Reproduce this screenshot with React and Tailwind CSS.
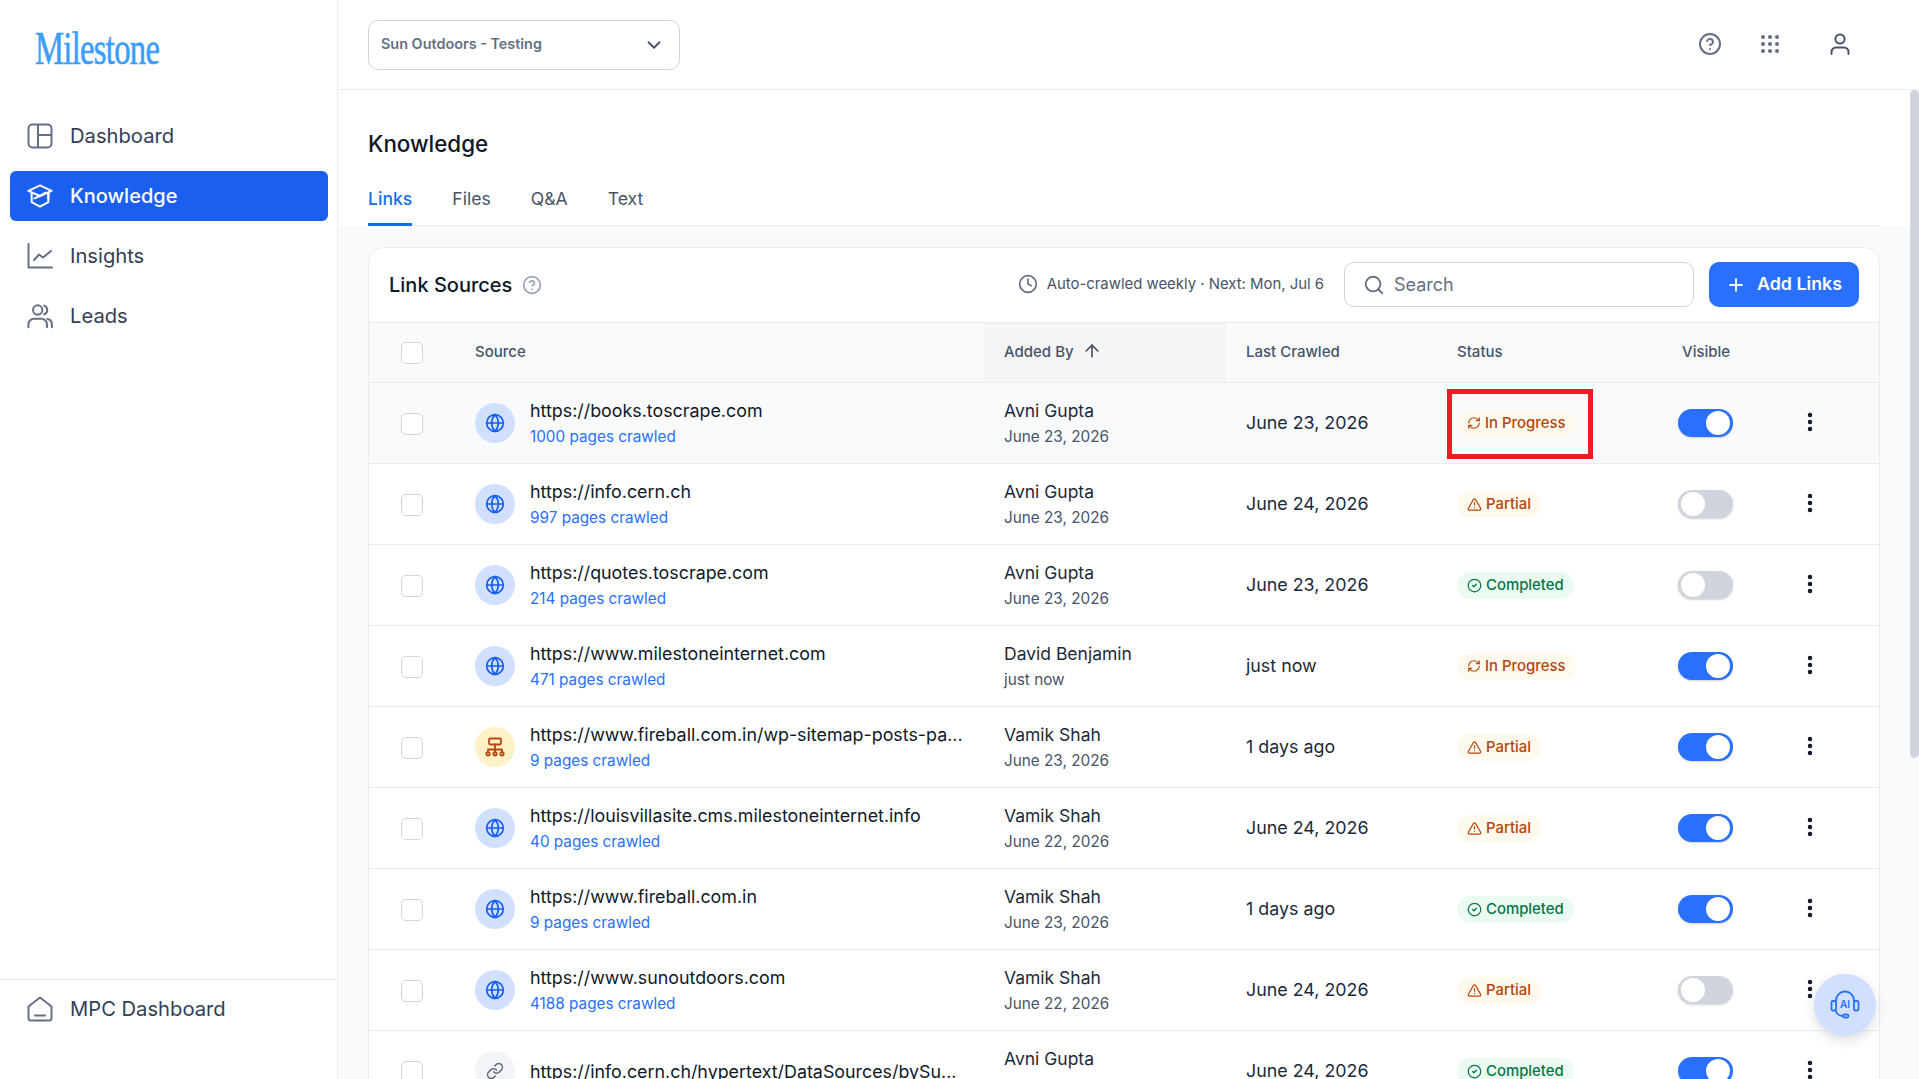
import React from "react";
import { Globe, ChevronDown, CircleHelp, Grip, Clock, Search, Plus, ArrowUp, EllipsisVertical, RefreshCw, TriangleAlert, CircleCheck, Link } from "lucide-react";

const Dash = ({ className }) => (
  <svg viewBox="0 0 26 26" fill="none" stroke="currentColor" strokeWidth="2" className={className}>
    <rect x="1.5" y="1.5" width="23" height="23" rx="4" />
    <path d="M11 1.5v23M11 12h13.5" />
  </svg>
);
const Cap = ({ className }) => (
  <svg viewBox="0 0 28 26" fill="none" stroke="currentColor" strokeWidth="2.2" strokeLinejoin="round" strokeLinecap="round" className={className}>
    <path d="M14 1.5 26.5 7.5 14 13 1.5 7.5z" />
    <path d="M5 10v9.5l9 5 9-5V10" />
    <path d="M8 15.5 14 13l6-3.5" />
    <path d="M23 9.5v6" />
  </svg>
);
const Chart = ({ className }) => (
  <svg viewBox="0 0 26 26" fill="none" stroke="currentColor" strokeWidth="2" strokeLinecap="round" strokeLinejoin="round" className={className}>
    <path d="M1.5 1v23.5H25" />
    <path d="M7 17l5-5.5 4 3 8-6.5" />
  </svg>
);
const Users = ({ className }) => (
  <svg viewBox="0 0 28 26" fill="none" stroke="currentColor" strokeWidth="2.2" strokeLinecap="round" className={className}>
    <circle cx="11.5" cy="6.5" r="5" />
    <path d="M1.5 25v-3a6 6 0 0 1 6-6h8a6 6 0 0 1 6 6v3" />
    <path d="M18.5 1.8a5 5 0 0 1 0 9.4" />
    <path d="M22 16.3c3 .6 4.8 3 4.8 5.7v3" />
  </svg>
);
const Home = ({ className }) => (
  <svg viewBox="0 0 26 26" fill="none" stroke="currentColor" strokeWidth="2" strokeLinecap="round" strokeLinejoin="round" className={className}>
    <path d="M1.5 10.5 13 1.5l11.5 9V22a2.5 2.5 0 0 1-2.5 2.5H4A2.5 2.5 0 0 1 1.5 22z" />
    <path d="M8 19.5h10" />
  </svg>
);
const UserIcon = ({ className }) => (
  <svg viewBox="0 0 20 22" fill="none" stroke="currentColor" strokeWidth="2" strokeLinecap="round" className={className}>
    <circle cx="10" cy="6" r="4.6" />
    <path d="M1.5 21v-2a4.5 4.5 0 0 1 4.5-4.5h8a4.5 4.5 0 0 1 4.5 4.5v2" />
  </svg>
);
const Sitemap = ({ className }) => (
  <svg viewBox="0 0 20 20" fill="none" stroke="currentColor" strokeWidth="1.8" strokeLinecap="round" strokeLinejoin="round" className={className}>
    <rect x="4" y="1.5" width="12" height="6" rx="1.2" />
    <path d="M10 7.5v8M3 15v-2.5h14V15" />
    <circle cx="3" cy="16.8" r="1.7" />
    <circle cx="10" cy="16.8" r="1.7" />
    <circle cx="17" cy="16.8" r="1.7" />
  </svg>
);
const Headset = ({ className }) => (
  <svg viewBox="0 0 30 30" fill="none" stroke="currentColor" strokeWidth="1.8" strokeLinecap="round" strokeLinejoin="round" className={className}>
    <path d="M6 11.5v-1a9 9 0 0 1 18 0v1" />
    <rect x="1.5" y="11" width="4.5" height="9.5" rx="1.4" />
    <rect x="24" y="11" width="4.5" height="9.5" rx="1.4" />
    <path d="M6 20.5c0 3 3 5.5 7 5.5" />
    <rect x="13" y="24.5" width="5.5" height="3" rx="1.5" />
  </svg>
);

const nav = [
  ["Dashboard", Dash],
  ["Knowledge", Cap],
  ["Insights", Chart],
  ["Leads", Users],
];

const rows = [
  ["https://books.toscrape.com", "1000 pages crawled", "Avni Gupta", "June 23, 2026", "June 23, 2026", "p", true, "g"],
  ["https://info.cern.ch", "997 pages crawled", "Avni Gupta", "June 23, 2026", "June 24, 2026", "w", false, "g"],
  ["https://quotes.toscrape.com", "214 pages crawled", "Avni Gupta", "June 23, 2026", "June 23, 2026", "c", false, "g"],
  ["https://www.milestoneinternet.com", "471 pages crawled", "David Benjamin", "just now", "just now", "p", true, "g"],
  ["https://www.fireball.com.in/wp-sitemap-posts-pa...", "9 pages crawled", "Vamik Shah", "June 23, 2026", "1 days ago", "w", true, "s"],
  ["https://louisvillasite.cms.milestoneinternet.info", "40 pages crawled", "Vamik Shah", "June 22, 2026", "June 24, 2026", "w", true, "g"],
  ["https://www.fireball.com.in", "9 pages crawled", "Vamik Shah", "June 23, 2026", "1 days ago", "c", true, "g"],
  ["https://www.sunoutdoors.com", "4188 pages crawled", "Vamik Shah", "June 22, 2026", "June 24, 2026", "w", false, "g"],
  ["https://info.cern.ch/hypertext/DataSources/bySu...", "", "Avni Gupta", "", "June 24, 2026", "c", true, "l"],
];

const gridCols = "grid grid-cols-[106px_509px_242px_212px_225px_117px_1fr]";

function Badge({ kind }) {
  if (kind === "p")
    return (
      <span className="inline-flex h-[27px] items-center gap-[4px] rounded-full bg-[#fff9ee] pl-[10px] pr-[10px] text-[14.9px] font-medium text-[#b54708]">
        <RefreshCw className="size-[14px]" strokeWidth={2} />
        In Progress
      </span>
    );
  if (kind === "w")
    return (
      <span className="inline-flex h-[27px] items-center gap-[4px] rounded-full bg-[#fff9ee] pl-[10px] pr-[10px] text-[14.9px] font-medium text-[#b54708]">
        <TriangleAlert className="size-[15px]" strokeWidth={2} />
        Partial
      </span>
    );
  return (
    <span className="inline-flex h-[27px] items-center gap-[4px] rounded-full bg-[#ebfbf2] pl-[10px] pr-[10px] text-[14.9px] font-medium text-[#067647]">
      <CircleCheck className="size-[15px]" strokeWidth={2} />
      Completed
    </span>
  );
}

function Toggle({ on }) {
  return on ? (
    <div className="flex h-[28px] w-[55px] items-center justify-end rounded-full bg-[#2970ff] pr-[3px] shadow-[0_1px_2px_rgba(16,24,40,0.2)]">
      <div className="size-[24px] rounded-full bg-white" />
    </div>
  ) : (
    <div className="flex h-[28px] w-[55px] items-center rounded-full bg-[#d0d5dd] pl-[3px] shadow-[0_1px_2px_rgba(16,24,40,0.2)]">
      <div className="size-[24px] rounded-full bg-white" />
    </div>
  );
}

function SrcIcon({ kind }) {
  if (kind === "s")
    return (
      <div className="flex size-[40px] shrink-0 items-center justify-center rounded-full bg-[#fef0c7] text-[#b54708]">
        <Sitemap className="size-[20px]" />
      </div>
    );
  if (kind === "l")
    return (
      <div className="flex size-[40px] shrink-0 items-center justify-center rounded-full bg-[#f2f4f7] text-[#667085]">
        <Link className="size-[18px]" />
      </div>
    );
  return (
    <div className="flex size-[40px] shrink-0 items-center justify-center rounded-full bg-[#d1e0ff] text-[#155eef]">
      <Globe className="size-[20px]" strokeWidth={2} />
    </div>
  );
}

function Check() {
  return <div className="size-[22px] rounded-[5px] border border-[#d0d5dd] bg-white" />;
}

function Row({ r, i }) {
  return (
    <div className={`${gridCols} h-[81px] border-b border-[#eaecf0] ${i === 0 ? "bg-[#f9fafb]" : "bg-white"}`}>
      <div className="flex items-center pt-[2px] pl-[32px]">
        <Check />
      </div>
      <div className="flex items-center gap-[15px]">
        <SrcIcon kind={r[7]} />
        <div className="min-w-0 pt-[1px]">
          <div className="h-[26px] text-[17.85px] leading-[26px] whitespace-nowrap text-[#101828]">{r[0]}</div>
          {r[1] && <div className="h-[26px] text-[15.3px] leading-[26px] whitespace-nowrap text-[#2970ff]">{r[1]}</div>}
        </div>
      </div>
      <div className="flex flex-col justify-center pt-[1px] pl-[20px]">
        <div className="h-[26px] text-[17.5px] leading-[26px] text-[#1d2939]">{r[2]}</div>
        <div className="h-[26px] text-[15.3px] leading-[26px] text-[#475467]">{r[3]}</div>
      </div>
      <div className="flex items-center pt-[1px] pl-[20px] text-[17.85px] text-[#1d2939]">{r[4]}</div>
      <div className="flex items-center pl-[19px]">
        <Badge kind={r[5]} />
      </div>
      <div className="flex items-center pl-[15px]">
        <Toggle on={r[6]} />
      </div>
      <div className="flex items-center pl-[18px]">
        <EllipsisVertical className="mt-[-2px] size-[24px] text-[#101828]" strokeWidth={2.5} />
      </div>
    </div>
  );
}

export default function App() {
  return (
    <div className="relative flex h-screen overflow-hidden bg-white font-['Inter',sans-serif] text-[#101828]">
      <aside className="flex w-[338px] shrink-0 flex-col justify-between border-r border-[#eaecf0] bg-white">
        <div>
          <div className="flex h-[101px] items-start pt-[24px] pl-[35px]">
            <span className="origin-left scale-x-[0.71] font-['Liberation_Serif',serif] text-[46px] leading-[50px] tracking-[-1px] whitespace-nowrap text-[#3b9dff] [-webkit-text-stroke:0.6px_#3b9dff]">
              Milestone
            </span>
          </div>
          <nav className="flex flex-col gap-[10px] pt-[10px] pr-[9px] pl-[10px]">
            {nav.map(([label, Icon], i) => (
              <div
                key={label}
                className={`flex h-[50px] items-center gap-[17px] rounded-[6px] pl-[17px] ${
                  i === 1 ? "bg-[#1a5fef] text-[20px] font-medium text-white" : "text-[20.2px] text-[#344054]"
                }`}
              >
                <Icon className={`size-[26px] shrink-0 ${i === 1 ? "text-white" : "text-[#667085]"}`} />
                {label}
              </div>
            ))}
          </nav>
        </div>
        <div className="flex h-[100px] items-start border-t border-[#eaecf0] px-[27px] pt-[14px]">
          <div className="flex items-center gap-[17px] text-[20.2px] text-[#344054]">
            <Home className="size-[26px] text-[#667085]" />
            MPC Dashboard
          </div>
        </div>
      </aside>

      <div className="flex min-w-0 flex-1 flex-col">
        <header className="flex h-[90px] shrink-0 items-center justify-between border-b border-[#eaecf0] pr-[68px] pl-[30px]">
          <div className="flex h-[50px] w-[312px] items-center justify-between rounded-[10px] border border-[#d0d5dd] pr-[14px] pl-[12px]">
            <span className="pb-[2px] text-[14.4px] font-semibold text-[#667085]">Sun Outdoors - Testing</span>
            <ChevronDown className="size-[22px] text-[#475467]" strokeWidth={2} />
          </div>
          <div className="mt-[-1px] flex items-center gap-[36px] text-[#667085]">
            <CircleHelp className="size-[24px]" strokeWidth={2} />
            <Grip className="size-[24px]" strokeWidth={2.1} />
            <UserIcon className="ml-[11px] size-[22px] text-[#475467]" />
          </div>
        </header>

        <div className="shrink-0 bg-white pr-[39px] pl-[30px]">
          <h1 className="mt-[39px] text-[22.4px] leading-[30px] font-medium text-[#101828]">Knowledge</h1>
          <div className="mt-[25px] flex h-[42px] gap-[40px] border-b border-[#eaecf0] pt-[2px] text-[17.6px] text-[#475467]">
            <div className="h-[40px] border-b-[3px] border-[#1570ef] font-medium text-[#1570ef]">Links</div>
            <div>Files</div>
            <div>Q&amp;A</div>
            <div>Text</div>
          </div>
        </div>

        <div className="min-h-0 flex-1 bg-[#f9fafc] pt-[21px] pr-[39px] pl-[30px]">
          <div className="overflow-hidden rounded-t-[16px] border border-[#eaecf0] bg-white">
            <div className="flex h-[75px] items-center border-b border-[#eaecf0] pr-[20px] pb-[1px] pl-[20px]">
              <div className="text-[20px] font-medium text-[#101828]">Link Sources</div>
              <CircleHelp className="ml-[10px] size-[20px] text-[#98a2b3]" strokeWidth={2} />
              <div className="ml-auto flex items-center gap-[9px] text-[14.9px] text-[#475467]">
                <Clock className="size-[20px] text-[#667085]" strokeWidth={2} />
                Auto-crawled weekly · Next: Mon, Jul 6
              </div>
              <div className="ml-[20px] flex h-[45px] w-[350px] items-center gap-[9px] rounded-[10px] border border-[#d0d5dd] pl-[18px] text-[18px] text-[#667085]">
                <Search className="size-[22px]" strokeWidth={2} />
                Search
              </div>
              <div className="ml-[15px] flex h-[45px] w-[150px] items-center justify-center gap-[11px] rounded-[10px] bg-[#2970ff] text-[17.8px] font-semibold text-white">
                <Plus className="size-[20px]" strokeWidth={2.2} />
                Add Links
              </div>
            </div>
            <div className={`${gridCols} h-[60px] border-b border-[#eaecf0] bg-[#f9fafb] text-[15px] font-medium text-[#475467]`}>
              <div className="flex items-center pl-[32px]">
                <Check />
              </div>
              <div className="flex items-center">Source</div>
              <div className="flex items-center gap-[8px] bg-[#f5f5f5] pl-[20px]">
                Added By
                <ArrowUp className="mt-[-3px] size-[20px] text-[#475467]" strokeWidth={2} />
              </div>
              <div className="flex items-center pl-[20px]">Last Crawled</div>
              <div className="flex items-center pl-[19px]">Status</div>
              <div className="flex items-center pl-[19px]">Visible</div>
              <div />
            </div>
            {rows.map((r, i) => (
              <Row key={r[0]} r={r} i={i} />
            ))}
          </div>
        </div>
      </div>

      {/* scrollbar */}
      <div className="absolute top-[90px] right-0 h-[668px] w-[9px] rounded-full bg-[#d0d5dd]" />

      {/* highlight rectangle */}
      <div className="absolute top-[389px] left-[1447px] h-[70px] w-[146px] border-[5px] border-[#ed1c24]" />

      {/* AI assistant */}
      <div className="absolute top-[974px] left-[1814px] flex size-[62px] items-center justify-center rounded-full bg-[#d1e0ff] text-[#2970ff] shadow-[0_4px_12px_rgba(16,24,40,0.15)]">
        <div className="relative size-[30px]">
          <Headset className="size-[30px]" />
          <span className="absolute inset-x-0 top-[8px] text-center text-[10px] leading-[12px] font-semibold">AI</span>
        </div>
      </div>
    </div>
  );
}
